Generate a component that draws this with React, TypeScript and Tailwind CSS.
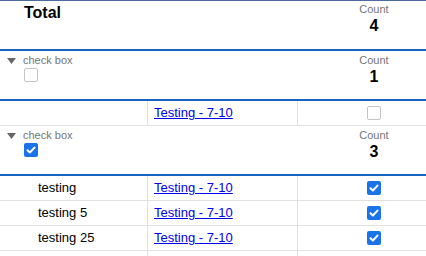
import React from "react";

const font = { fontFamily: '"Liberation Sans", Arial, sans-serif' };

function Tri() {
  return (
    <svg width="9" height="6" viewBox="0 0 9 6" className="mt-[4px] shrink-0">
      <polygon points="0,0 9,0 4.5,6" fill="#666666" />
    </svg>
  );
}

function Box({ checked }: { checked?: boolean }) {
  if (checked) {
    return (
      <div className="w-[14px] h-[14px] rounded-[2px] bg-[#1a73e8] flex items-center justify-center">
        <svg width="14" height="14" viewBox="0 0 14 14">
          <path d="M3.5 7.2 L5.9 9.5 L10.5 4.6" fill="none" stroke="#ffffff" strokeWidth="2" strokeLinecap="round" strokeLinejoin="round" />
        </svg>
      </div>
    );
  }
  return <div className="w-[14px] h-[14px] rounded-[2px] border border-[#c4c4c4] bg-white" />;
}

function CountCell({ n }: { n: number }) {
  return (
    <div className="flex flex-col items-center pt-[2px]">
      <div className="text-[11px] leading-[13px] text-[#757575]">Count</div>
      <div className="text-[16px] leading-[20px] font-bold text-black">{n}</div>
    </div>
  );
}

function GroupHeader({ checked, n }: { checked?: boolean; n: number }) {
  return (
    <div className="grid grid-cols-[148px_150px_152px] h-[50px] border-b-2 border-[#1565c0]">
      <div className="col-span-2 flex items-start pl-[7px] pt-[3px]">
        <div className="w-[16px]">
          <Tri />
        </div>
        <div className="flex flex-col">
          <div className="text-[11px] leading-[13px] text-[#757575]">check box</div>
          <div className="ml-[1px] mt-[1px]">
            <Box checked={checked} />
          </div>
        </div>
      </div>
      <div className="pt-[1px]">
        <CountCell n={n} />
      </div>
    </div>
  );
}

function DataRow({ name, link, checked, last }: { name?: string; link?: boolean; checked?: boolean; last?: boolean }) {
  return (
    <div className={"grid grid-cols-[148px_150px_152px] h-[25px] " + (last ? "" : "border-b border-[#e0e0e0]")}>
      <div className="border-r border-[#e0e0e0] flex items-center pl-[38px] text-[13px] text-black">{name}</div>
      <div className="border-r border-[#e0e0e0] flex items-center pl-[6px] text-[13px]">
        {link ? <a href="#" className="text-[#0000ee] underline">Testing - 7-10</a> : null}
      </div>
      <div className="flex items-center justify-center">
        {checked === undefined ? null : <Box checked={checked} />}
      </div>
    </div>
  );
}

export default function App() {
  return (
    <div className="w-[426px] h-[256px] overflow-hidden bg-white" style={font}>
      <div className="w-[450px]">
        <div className="grid grid-cols-[148px_150px_152px] h-[51px] border-t border-[#4d6a9c] border-b-2 border-b-[#1565c0]">
          <div className="col-span-2 pl-[24px] pt-[2px] text-[16px] leading-[20px] font-bold text-black">Total</div>
          <CountCell n={4} />
        </div>
        <GroupHeader n={1} />
        <DataRow link checked={false} />
        <GroupHeader checked n={3} />
        <DataRow name="testing" link checked />
        <DataRow name="testing 5" link checked />
        <DataRow name="testing 25" link checked />
        <DataRow last />
      </div>
    </div>
  );
}
